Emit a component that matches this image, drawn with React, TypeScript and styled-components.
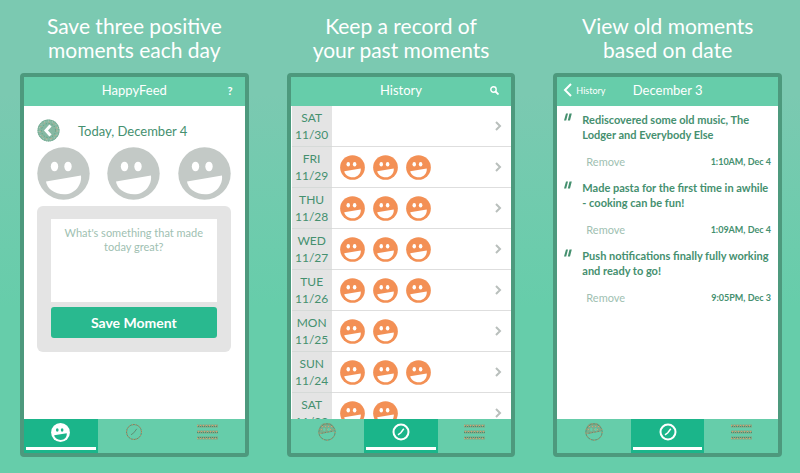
import React from "react";
import styled, { createGlobalStyle } from "styled-components";

const color = {
  mint: "#66cdaa",
  frame: "#4d997d",
  active: "#1bb58a",
  ink: "#45906f",
  faded: "#a0bfb2",
  panel: "#e4e4e4",
  grey: "#c3c9c6",
  orange: "#f39055",
};

const GlobalStyle = createGlobalStyle`
  * { box-sizing: border-box; }
  body {
    margin: 0;
    font-family: Lato, "Open Sans", sans-serif;
    color: ${color.ink};
  }
  button, textarea { font-family: inherit; }
  button { border: 0; padding: 0; background: none; cursor: pointer; color: inherit; }
  svg { display: block; flex: none; }
`;

const Page = styled.main`
  display: grid;
  grid-template-columns: repeat(3, 1fr);
  gap: 38px;
  min-height: 100vh;
  padding: 14px 18px 16px 20px;
  background: linear-gradient(#7bc9b1 0, #7bc9b1 20%, ${color.mint} 65%);
`;

const Feature = styled.section`
  display: flex;
  flex-direction: column;
  min-width: 0;
`;

const Caption = styled.h2`
  margin: 0 0 11px;
  color: #fff;
  font-size: 21px;
  line-height: 24px;
  font-weight: 400;
  text-align: center;
  white-space: nowrap;
`;

const Phone = styled.div`
  flex: 1;
  display: flex;
  flex-direction: column;
  border: 4px solid ${color.frame};
  border-radius: 4px;
  background: #fff;
`;

const Header = styled.header`
  display: grid;
  grid-template-columns: 1fr auto 1fr;
  align-items: center;
  height: 29px;
  padding: 0 6px 3px;
  background: ${color.mint};
  color: #fff;
`;

const Title = styled.h1`
  grid-column: 2;
  margin: 0;
  font-size: 13px;
  line-height: 18px;
  font-weight: 400;
`;

const HeaderAction = styled.button<{ $side?: "left" }>`
  grid-row: 1;
  grid-column: ${(p) => (p.$side ? 1 : 3)};
  justify-self: ${(p) => (p.$side ? "start" : "end")};
  display: flex;
  align-items: center;
  gap: 4px;
  padding: ${(p) => (p.$side ? "0" : "0 6px")};
  font-size: ${(p) => (p.$side ? "9px" : "11px")};
  font-weight: ${(p) => (p.$side ? 400 : 700)};
`;

const Compose = styled.div`
  flex: 1;
  padding: 13px 14px 20px 13px;
`;

const DateRow = styled.div`
  display: flex;
  align-items: center;
  gap: 18px;
  height: 23px;
  font-size: 13px;
`;

const RoundButton = styled.button`
  border-radius: 50%;
`;

const Faces = styled.div`
  display: flex;
  justify-content: space-between;
  margin-top: 5px;
`;

const Card = styled.form`
  display: flex;
  flex-direction: column;
  gap: 5px;
  margin-top: 6px;
  padding: 13px 14px 14px;
  border-radius: 6px;
  background: ${color.panel};
`;

const Entry = styled.textarea`
  display: block;
  height: 83px;
  padding: 7px 8px;
  border: 0;
  resize: none;
  overflow: hidden;
  background: #fff;
  color: ${color.ink};
  font-size: 11px;
  line-height: 14px;
  text-align: center;
  &::placeholder { color: ${color.faded}; opacity: 1; }
`;

const SaveButton = styled.button`
  height: 31px;
  border-radius: 3px;
  background: #29b98f;
  color: #fff;
  font-size: 14px;
  font-weight: 700;
`;

const DayList = styled.ul`
  flex: 1 1 0;
  min-height: 0;
  margin: 0;
  padding: 0 0 0 1px;
  list-style: none;
  overflow: hidden;
`;

const Day = styled.li`
  display: flex;
  align-items: stretch;
  height: 41px;
`;

const DayLabel = styled.div`
  display: flex;
  flex-direction: column;
  justify-content: center;
  width: 40px;
  background: ${color.panel};
  border-bottom: 1px solid #d6dad8;
  font-size: 12px;
  line-height: 17px;
  text-align: center;
`;

const DayMoments = styled.div`
  flex: 1;
  display: flex;
  align-items: center;
  gap: 8px;
  padding: 0 9px 0 8px;
  border-bottom: 1px solid #dedede;
`;

const OpenDay = styled.button`
  margin-left: auto;
  color: #b9bfbc;
`;

const Moments = styled.div`
  flex: 1;
  padding: 6px 7px;
`;

const Moment = styled.article`
  display: grid;
  grid-template-columns: 18px 1fr;
  height: 68px;
`;

const Quote = styled.span`
  padding-top: 1px;
`;

const MomentText = styled.p`
  margin: 0;
  font-size: 11px;
  line-height: 15px;
  font-weight: 700;
  white-space: pre;
`;

const MomentMeta = styled.div`
  grid-column: 2;
  display: flex;
  justify-content: space-between;
  align-items: center;
  height: 18px;
  padding-left: 4px;
`;

const Remove = styled.button`
  color: ${color.faded};
  font-size: 11px;
`;

const Time = styled.time`
  font-size: 9px;
  font-weight: 700;
`;

const Tabs = styled.nav`
  display: grid;
  grid-template-columns: repeat(3, 1fr);
  height: 34px;
  background: ${color.mint};
`;

const Tab = styled.button<{ $active: boolean }>`
  display: flex;
  flex-direction: column;
  align-items: center;
  justify-content: space-between;
  padding: 4px 2px 3px;
  background: ${(p) => (p.$active ? color.active : "transparent")};
  &::after {
    content: "";
    width: 100%;
    height: 3px;
    background: ${(p) => (p.$active ? "#fff" : "transparent")};
  }
`;

function Smiley({ size, fill, hole = "#fff" }: { size: number; fill: string; hole?: string }) {
  return (
    <svg width={size} height={size} viewBox="0 0 53 53" aria-hidden="true">
      <circle cx="26.5" cy="26.5" r="26.2" fill={fill} />
      <ellipse cx="17.5" cy="19.5" rx="3.7" ry="4.8" fill={hole} />
      <ellipse cx="31" cy="19.5" rx="3.7" ry="4.8" fill={hole} />
      <path d="M9 34.5 L44 28.5 C45 38 38 47.3 27 47.3 C17.5 47.3 10 41.5 9 34.5Z" fill={hole} />
    </svg>
  );
}

function Chevron({ dir, w, h, stroke }: { dir: "left" | "right"; w: number; h: number; stroke: number }) {
  const d = dir === "left" ? `M${w - 1} 1 L2 ${h / 2} L${w - 1} ${h - 1}` : `M1 1 L${w - 2} ${h / 2} L1 ${h - 1}`;
  return (
    <svg width={w} height={h} aria-hidden="true">
      <path d={d} fill="none" stroke="currentColor" strokeWidth={stroke} />
    </svg>
  );
}

function BackDisc() {
  return (
    <svg width="23" height="23" viewBox="0 0 23 23" aria-hidden="true">
      <circle cx="11.5" cy="11.5" r="11" fill="#86b8a2" />
      <g fill="none" strokeWidth="1">
        <circle cx="11.5" cy="11.5" r="10.5" stroke="#6ba58b" strokeDasharray="1 1" />
        <circle cx="11.5" cy="11.5" r="8.5" stroke="#dfa27a" strokeDasharray="1 4" />
        <circle cx="11.5" cy="11.5" r="7" stroke="#5b9c80" strokeDasharray="1 2" />
        <circle cx="11.5" cy="11.5" r="9.5" stroke="#b9d0c5" strokeDasharray="1 3" />
      </g>
      <path d="M13.5 6.5 L9 11.5 L13.5 16.5" fill="none" stroke="#fff" strokeWidth="3" />
    </svg>
  );
}

function FaceTabIcon({ active }: { active: boolean }) {
  if (active) return <Smiley size={19} fill="#fff" hole={color.active} />;
  return (
    <svg width="18" height="18" viewBox="0 0 18 18" aria-hidden="true">
      <path d="M1.5 10 A7.8 7.8 0 1 1 16.5 8 L11 9 L3 10.5Z" fill="#77b08f" />
      <g fill="none" strokeWidth="1">
        <circle cx="9" cy="9" r="8.2" stroke="#5f8f74" />
        <circle cx="9" cy="9" r="8.2" stroke="#e2965f" strokeDasharray="1 3" />
        <path d="M2.5 10.5 L15.5 8" stroke="#5f8f74" />
        <path d="M2.5 10.5 L15.5 8 M4 3.5 L14 3.5 M3 6.5 L15 6.5" stroke="#d9a071" strokeDasharray="1 2" />
      </g>
      <ellipse cx="6.3" cy="6.5" rx="1.2" ry="1.8" fill={color.mint} />
      <ellipse cx="10.7" cy="6.5" rx="1.2" ry="1.8" fill={color.mint} />
    </svg>
  );
}

function ClockTabIcon({ active }: { active: boolean }) {
  return (
    <svg width="18" height="18" viewBox="0 0 18 18" fill="none" aria-hidden="true">
      <circle cx="9" cy="9" r="7.5" stroke={active ? "#fff" : "#5f8f74"} strokeWidth={active ? 2 : 1} />
      {!active && <circle cx="9" cy="9" r="7.5" stroke="#e2965f" strokeDasharray="1 2" />}
      <path d="M6 11.8 L8.8 9.8 L11.8 5.8" stroke={active ? "#fff" : "#5f8f74"} strokeWidth={active ? 1.5 : 1} />
    </svg>
  );
}

function MenuTabIcon() {
  return (
    <svg width="21" height="18" viewBox="0 0 21 18" fill="none" aria-hidden="true">
      <path d="M0 3 H21 M0 9 H21 M0 15 H21" stroke="#86a783" strokeWidth="3" />
      <path d="M0 2.5 H21 M1 8.5 H21 M0 15.5 H21" stroke="#dba06e" strokeDasharray="1 2" />
      <path d="M1 3.5 H21 M0 9.5 H21 M1 14.5 H21" stroke="#4f8a6e" strokeDasharray="1 1" />
    </svg>
  );
}

function TabBar({ active }: { active: number }) {
  return (
    <Tabs aria-label="Sections">
      <Tab $active={active === 0} aria-label="Today"><FaceTabIcon active={active === 0} /></Tab>
      <Tab $active={active === 1} aria-label="History"><ClockTabIcon active={active === 1} /></Tab>
      <Tab $active={active === 2} aria-label="Menu"><MenuTabIcon /></Tab>
    </Tabs>
  );
}

const days: [string, string, number][] = [
  ["SAT", "11/30", 0],
  ["FRI", "11/29", 3],
  ["THU", "11/28", 3],
  ["WED", "11/27", 3],
  ["TUE", "11/26", 3],
  ["MON", "11/25", 2],
  ["SUN", "11/24", 3],
  ["SAT", "11/23", 2],
];

const moments = [
  { text: "Rediscovered some old music, The\nLodger and Everybody Else", time: "1:10AM, Dec 4" },
  { text: "Made pasta for the first time in awhile\n- cooking can be fun!", time: "1:09AM, Dec 4" },
  { text: "Push notifications finally fully working\nand ready to go!", time: "9:05PM, Dec 3" },
];

export default function App() {
  return (
    <>
      <GlobalStyle />
      <Page>
        <Feature>
          <Caption>Save three positive<br />moments each day</Caption>
          <Phone>
            <Header>
              <Title>HappyFeed</Title>
              <HeaderAction aria-label="Help">?</HeaderAction>
            </Header>
            <Compose>
              <DateRow>
                <RoundButton aria-label="Previous day"><BackDisc /></RoundButton>
                Today, December 4
              </DateRow>
              <Faces>
                {[0, 1, 2].map((i) => <Smiley key={i} size={53} fill={color.grey} />)}
              </Faces>
              <Card onSubmit={(e) => e.preventDefault()}>
                <Entry aria-label="Moment" placeholder="What's something that made today great?" />
                <SaveButton type="submit">Save Moment</SaveButton>
              </Card>
            </Compose>
            <TabBar active={0} />
          </Phone>
        </Feature>

        <Feature>
          <Caption>Keep a record of<br />your past moments</Caption>
          <Phone>
            <Header>
              <Title>History</Title>
              <HeaderAction aria-label="Search">
                <svg width="9" height="9" viewBox="0 0 9 9" fill="none" stroke="currentColor" aria-hidden="true">
                  <circle cx="3.5" cy="3.5" r="2.7" strokeWidth="1.4" />
                  <path d="M5.5 5.5 L8.5 8.5" strokeWidth="1.8" />
                </svg>
              </HeaderAction>
            </Header>
            <DayList>
              {days.map(([name, date, count]) => (
                <Day key={date}>
                  <DayLabel><span>{name}</span><span>{date}</span></DayLabel>
                  <DayMoments>
                    {Array.from({ length: count }, (_, i) => <Smiley key={i} size={25} fill={color.orange} />)}
                    <OpenDay aria-label={`Open ${date}`}><Chevron dir="right" w={7} h={10} stroke={2} /></OpenDay>
                  </DayMoments>
                </Day>
              ))}
            </DayList>
            <TabBar active={1} />
          </Phone>
        </Feature>

        <Feature>
          <Caption>View old moments<br />based on date</Caption>
          <Phone>
            <Header>
              <HeaderAction $side="left"><Chevron dir="left" w={9} h={14} stroke={2} />History</HeaderAction>
              <Title>December 3</Title>
            </Header>
            <Moments>
              {moments.map((m) => (
                <Moment key={m.text}>
                  <Quote>
                    <svg width="8" height="8" viewBox="0 0 8 8" fill={color.ink} aria-hidden="true">
                      <path d="M2 0.5 H4 L2.2 7.5 H0Z M5.5 0.5 H7.8 L6 7.5 H3.8Z" />
                    </svg>
                  </Quote>
                  <MomentText>{m.text}</MomentText>
                  <MomentMeta>
                    <Remove>Remove</Remove>
                    <Time>{m.time}</Time>
                  </MomentMeta>
                </Moment>
              ))}
            </Moments>
            <TabBar active={1} />
          </Phone>
        </Feature>
      </Page>
    </>
  );
}
